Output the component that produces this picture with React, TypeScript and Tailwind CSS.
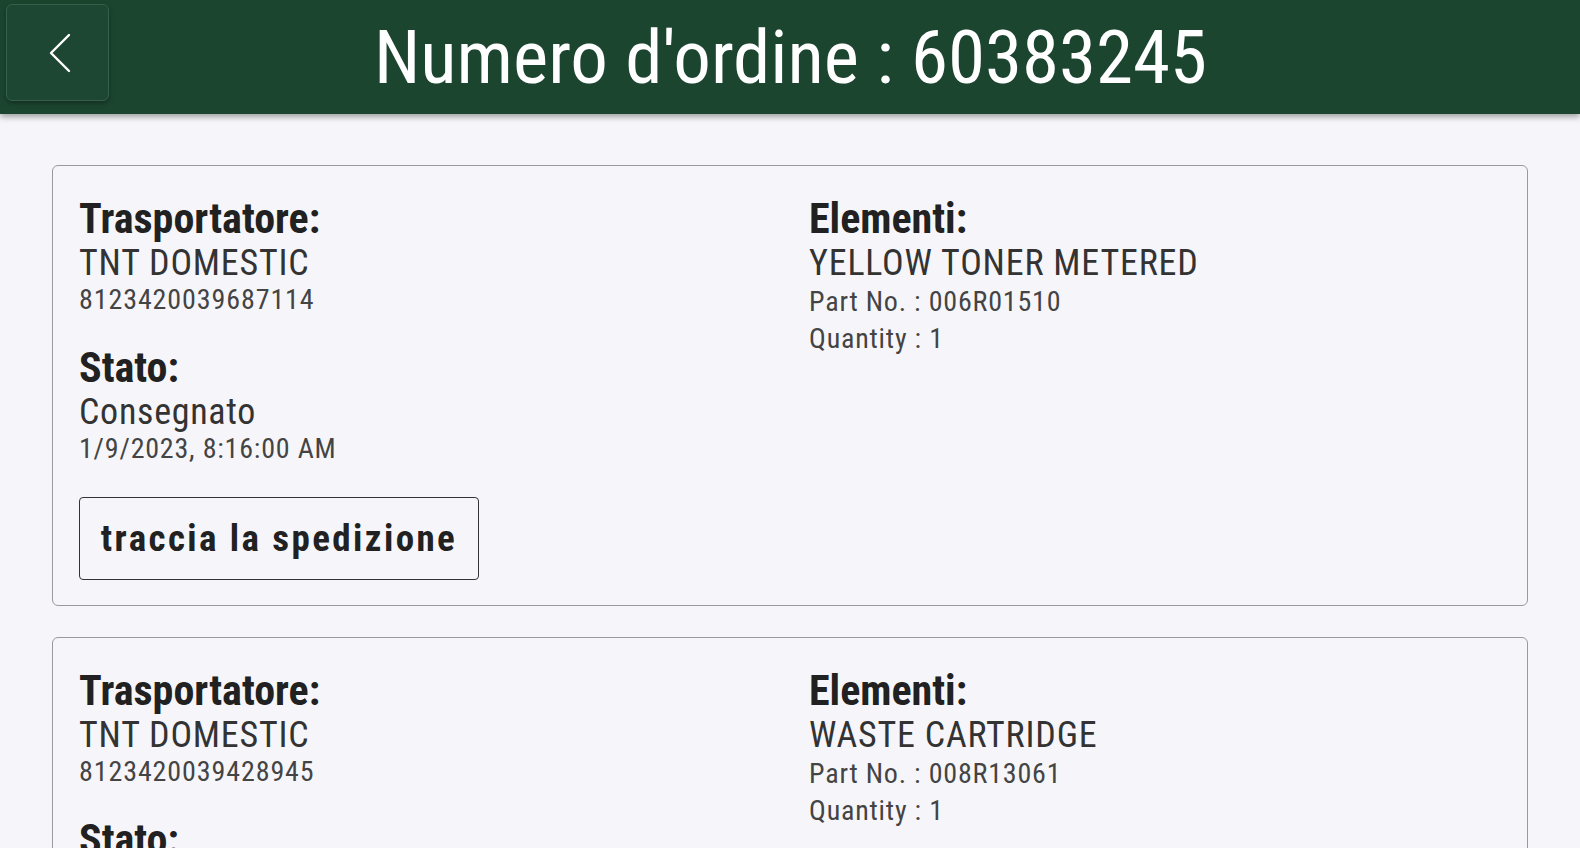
type Shipment = {
  carrier: string;
  tracking: string;
  status: string;
  date: string;
  item: string;
  partNo: string;
  quantity: number;
};

const shipments: Shipment[] = [
  {
    carrier: 'TNT DOMESTIC',
    tracking: '8123420039687114',
    status: 'Consegnato',
    date: '1/9/2023, 8:16:00 AM',
    item: 'YELLOW TONER METERED',
    partNo: '006R01510',
    quantity: 1,
  },
  {
    carrier: 'TNT DOMESTIC',
    tracking: '8123420039428945',
    status: 'Consegnato',
    date: '1/9/2023, 8:16:00 AM',
    item: 'WASTE CARTRIDGE',
    partNo: '008R13061',
    quantity: 1,
  },
];

const Label = ({ children }: { children: React.ReactNode }) => (
  <div className="text-[42px] leading-[48px] font-bold text-[#212121]">{children}</div>
);

const ShipmentCard = ({ s }: { s: Shipment }) => (
  <div className="mx-[52px] rounded-[6px] border border-[#9a9a9a] px-[26px] pt-[29px] pb-[25px]">
    <div className="grid grid-cols-[730px_1fr]">
      {/* colonna sinistra */}
      <div>
        <Label>Trasportatore:</Label>
        <div className="text-[36px] leading-[40px] tracking-[0.8px] text-[#333]">{s.carrier}</div>
        <div className="text-[28px] leading-[34px] tracking-[0.9px] text-[#444]">{s.tracking}</div>

        <div className="mt-[27px]">
          <Label>Stato:</Label>
          <div className="text-[36px] leading-[40px] tracking-[0.7px] text-[#333]">{s.status}</div>
          <div className="text-[28px] leading-[34px] tracking-[0.8px] text-[#444]">{s.date}</div>
        </div>

        <button className="mt-[31px] h-[83px] w-[400px] rounded-[4px] border border-[#333] text-[37px] font-bold tracking-[2.4px] text-[#212121]">
          traccia la spedizione
        </button>
      </div>

      {/* colonna destra */}
      <div>
        <Label>Elementi:</Label>
        <div className="text-[36px] leading-[40px] tracking-[0.8px] text-[#333]">{s.item}</div>
        <div className="text-[28px] leading-[37px] tracking-[0.8px] text-[#444]">Part No. : {s.partNo}</div>
        <div className="text-[28px] leading-[37px] tracking-[0.8px] text-[#444]">Quantity : {s.quantity}</div>
      </div>
    </div>
  </div>
);

export default function App() {
  return (
    <div className="min-h-[848px] bg-[#f6f6fa] font-['Roboto_Condensed',Roboto,sans-serif]">
      {/* intestazione */}
      <div className="flex h-[114px] items-center bg-[#1c4530] pl-[6px] pr-[108px] shadow-[0_3px_6px_rgba(0,0,0,0.35)]">
        <button className="mt-[4px] flex h-[97px] w-[103px] items-center justify-center self-start rounded-[6px] border border-[#35604a] bg-[#1d4732] shadow-[0_2px_5px_rgba(0,0,0,0.35)]">
          <svg className="ml-[5px]" width="24" height="40" viewBox="0 0 24 40" fill="none" stroke="white" strokeWidth="2.4" strokeLinecap="round" strokeLinejoin="round">
            <path d="M21 2 3 20l18 18" />
          </svg>
        </button>
        <h1 className="flex-1 text-center text-[75px] leading-none text-white">Numero d'ordine : 60383245</h1>
      </div>

      <div className="flex flex-col gap-[31px] pt-[51px]">
        {shipments.map((s) => (
          <ShipmentCard key={s.tracking} s={s} />
        ))}
      </div>
    </div>
  );
}
